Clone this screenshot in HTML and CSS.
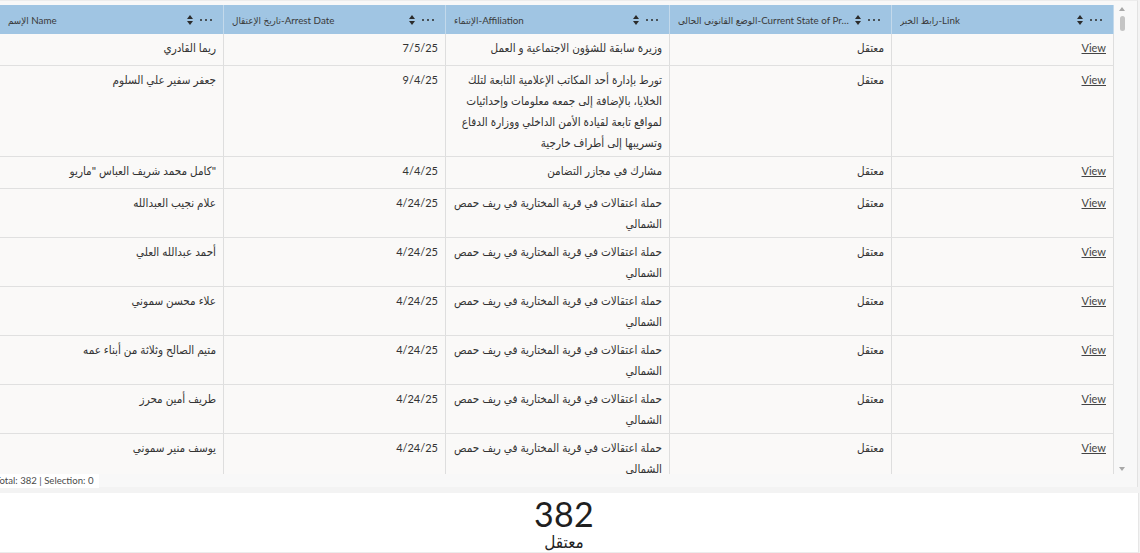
FILE: index.html
```html
<!DOCTYPE html>
<html lang="ar">
<head>
<meta charset="utf-8">
<title>Detainees table</title>
<link rel="stylesheet" href="styles.css">
</head>
<body>
<div class="app">
  <section class="table-panel">
    <div class="grid-wrap">
      <div class="grid">
        <div class="head row">
          <div class="hcell"><span class="htitle" dir="ltr">الإسم Name</span><span class="sort"><svg width="6" height="10" viewBox="0 0 6 10"><path d="M3 0 L6 4 L0 4 Z M0 6 L6 6 L3 10 Z" fill="#2b2b2b"/></svg></span><span class="dots"><i></i><i></i><i></i></span></div>
          <div class="hcell"><span class="htitle" dir="ltr">تاريخ الإعتقال-Arrest Date</span><span class="sort"><svg width="6" height="10" viewBox="0 0 6 10"><path d="M3 0 L6 4 L0 4 Z M0 6 L6 6 L3 10 Z" fill="#2b2b2b"/></svg></span><span class="dots"><i></i><i></i><i></i></span></div>
          <div class="hcell"><span class="htitle" dir="ltr">الإنتماء-Affiliation</span><span class="sort"><svg width="6" height="10" viewBox="0 0 6 10"><path d="M3 0 L6 4 L0 4 Z M0 6 L6 6 L3 10 Z" fill="#2b2b2b"/></svg></span><span class="dots"><i></i><i></i><i></i></span></div>
          <div class="hcell"><span class="htitle" dir="ltr">الوضع القانوني الحالي-Current State of Proceedings</span><span class="sort"><svg width="6" height="10" viewBox="0 0 6 10"><path d="M3 0 L6 4 L0 4 Z M0 6 L6 6 L3 10 Z" fill="#2b2b2b"/></svg></span><span class="dots"><i></i><i></i><i></i></span></div>
          <div class="hcell"><span class="htitle" dir="ltr">رابط الخبر-Link</span><span class="sort"><svg width="6" height="10" viewBox="0 0 6 10"><path d="M3 0 L6 4 L0 4 Z M0 6 L6 6 L3 10 Z" fill="#2b2b2b"/></svg></span><span class="dots"><i></i><i></i><i></i></span></div>
        </div>
        <div class="body">
          <div class="row">
            <div class="cell" dir="rtl">ريما القادري</div>
            <div class="cell num">7/5/25</div>
            <div class="cell" dir="rtl">وزيرة سابقة للشؤون الاجتماعية و العمل</div>
            <div class="cell" dir="rtl">معتقل</div>
            <div class="cell num"><a href="#">View</a></div>
          </div>
          <div class="row">
            <div class="cell" dir="rtl">جعفر سفير علي السلوم</div>
            <div class="cell num">9/4/25</div>
            <div class="cell" dir="rtl">تورط بإدارة أحد المكاتب الإعلامية التابعة لتلك الخلايا، بالإضافة إلى جمعه معلومات وإحداثيات لمواقع تابعة لقيادة الأمن الداخلي ووزارة الدفاع وتسريبها إلى أطراف خارجية</div>
            <div class="cell" dir="rtl">معتقل</div>
            <div class="cell num"><a href="#">View</a></div>
          </div>
          <div class="row">
            <div class="cell" dir="rtl">"كامل محمد شريف العباس "ماريو</div>
            <div class="cell num">4/4/25</div>
            <div class="cell" dir="rtl">مشارك في مجازر التضامن</div>
            <div class="cell" dir="rtl">معتقل</div>
            <div class="cell num"><a href="#">View</a></div>
          </div>
          <div class="row">
            <div class="cell" dir="rtl">علام نجيب العبدالله</div>
            <div class="cell num">4/24/25</div>
            <div class="cell" dir="rtl">حملة اعتقالات في قرية المختارية في ريف حمص الشمالي</div>
            <div class="cell" dir="rtl">معتقل</div>
            <div class="cell num"><a href="#">View</a></div>
          </div>
          <div class="row">
            <div class="cell" dir="rtl">أحمد عبدالله العلي</div>
            <div class="cell num">4/24/25</div>
            <div class="cell" dir="rtl">حملة اعتقالات في قرية المختارية في ريف حمص الشمالي</div>
            <div class="cell" dir="rtl">معتقل</div>
            <div class="cell num"><a href="#">View</a></div>
          </div>
          <div class="row">
            <div class="cell" dir="rtl">علاء محسن سموني</div>
            <div class="cell num">4/24/25</div>
            <div class="cell" dir="rtl">حملة اعتقالات في قرية المختارية في ريف حمص الشمالي</div>
            <div class="cell" dir="rtl">معتقل</div>
            <div class="cell num"><a href="#">View</a></div>
          </div>
          <div class="row">
            <div class="cell" dir="rtl">متيم الصالح وثلاثة من أبناء عمه</div>
            <div class="cell num">4/24/25</div>
            <div class="cell" dir="rtl">حملة اعتقالات في قرية المختارية في ريف حمص الشمالي</div>
            <div class="cell" dir="rtl">معتقل</div>
            <div class="cell num"><a href="#">View</a></div>
          </div>
          <div class="row">
            <div class="cell" dir="rtl">طريف أمين محرز</div>
            <div class="cell num">4/24/25</div>
            <div class="cell" dir="rtl">حملة اعتقالات في قرية المختارية في ريف حمص الشمالي</div>
            <div class="cell" dir="rtl">معتقل</div>
            <div class="cell num"><a href="#">View</a></div>
          </div>
          <div class="row">
            <div class="cell" dir="rtl">يوسف منير سموني</div>
            <div class="cell num">4/24/25</div>
            <div class="cell" dir="rtl">حملة اعتقالات في قرية المختارية في ريف حمص الشمالي</div>
            <div class="cell" dir="rtl">معتقل</div>
            <div class="cell num"><a href="#">View</a></div>
          </div>
        </div>
      </div>
      <div class="vscroll">
        <span class="arrow up"></span>
        <span class="thumb"></span>
        <span class="spacer"></span>
        <span class="arrow down"></span>
      </div>
    </div>
    <div class="status"><span class="status-text">Total: 382 | Selection: 0</span></div>
  </section>
  <section class="summary">
    <div class="big">382</div>
    <div class="label" dir="rtl">معتقل</div>
  </section>
</div>
</body>
</html>
```
FILE: styles.css
```css
* { box-sizing: border-box; }
html, body { margin: 0; padding: 0; }
body {
  background: #f3f3f3;
  font-family: "Lato", "DejaVu Sans Condensed", "DejaVu Sans", sans-serif;
  color: #323232;
}
.app {
  width: 1140px;
  height: 553px;
  display: flex;
  flex-direction: column;
  overflow: hidden;
}
.table-panel {
  height: 487px;
  margin-right: 2px;
  padding-top: 4px;
  background: #f8f8f8;
  border-top: 1px solid #ececec;
  border-right: 1px solid #e2e2e2;
  display: flex;
  flex-direction: column;
}
.grid-wrap {
  display: flex;
  height: 469px;
}
.grid {
  width: 1114px;
  display: flex;
  flex-direction: column;
  background: #faf9f8;
}
.row {
  display: grid;
  grid-template-columns: 224px 222px 224px 222px 222px;
  border-bottom: 1px solid #e0e0e0;
}
.head {
  height: 29px;
  background: #a0c5e3;
  border-bottom: none;
}
.hcell {
  display: flex;
  align-items: center;
  padding: 0 11px 0 8px;
  border-right: 1px solid #c3d9eb;
  font-size: 9.8px;
  color: #3a3a3a;
  min-width: 0;
}
.htitle {
  flex: 1;
  min-width: 0;
  white-space: nowrap;
  overflow: hidden;
  text-overflow: ellipsis;
  text-align: left;
}
.sort {
  display: flex;
  margin: 0 7px 0 6px;
}
.dots {
  display: flex;
  gap: 3px;
}
.dots i {
  width: 2px;
  height: 2px;
  background: #2b2b2b;
  border-radius: 50%;
  display: block;
}
.body {
  height: 440px;
  overflow: hidden;
}
.cell {
  min-height: 31px;
  padding: 3px 7px 3px 4px;
  line-height: 21px;
  font-size: 11.6px;
  text-align: right;
  border-right: 1px solid #dedede;
  color: #333;
}
.cell.num {
  direction: ltr;
  font-size: 11px;
}
.cell a {
  color: #444444;
  text-decoration: underline;
}
.vscroll {
  width: 16px;
  display: flex;
  flex-direction: column;
  align-items: center;
  padding: 2px 0 3px 0;
}
.arrow {
  width: 0;
  height: 0;
  border-left: 3.5px solid transparent;
  border-right: 3.5px solid transparent;
  display: block;
}
.arrow.up { border-bottom: 4px solid #a8a8a8; }
.arrow.down { border-top: 4px solid #a8a8a8; }
.thumb {
  width: 5px;
  height: 15px;
  margin-top: 5px;
  border-radius: 3px;
  background: #c4c4c4;
  display: block;
}
.spacer { flex: 1; }
.status {
  height: 14px;
  font-size: 9.6px;
  line-height: 14px;
  color: #4a4a4a;
}
.status-text {
  display: inline-block;
  background: #ffffff;
  margin-left: -5px;
  padding-right: 6px;
}
.summary {
  margin-top: 6px;
  height: 60px;
  margin-right: 1px;
  padding-right: 10px;
  background: #ffffff;
  border-right: 1px solid #e6e6e6;
  border-bottom: 1px solid #ececec;
  display: flex;
  flex-direction: column;
  align-items: center;
}
.big {
  font-size: 34px;
  line-height: 34px;
  margin-top: 4px;
  color: #1f1f1f;
  letter-spacing: 0.3px;
}
.label {
  font-size: 17px;
  line-height: 19px;
  margin-top: 1px;
  font-weight: normal;
  color: #1f1f1f;
}
```
